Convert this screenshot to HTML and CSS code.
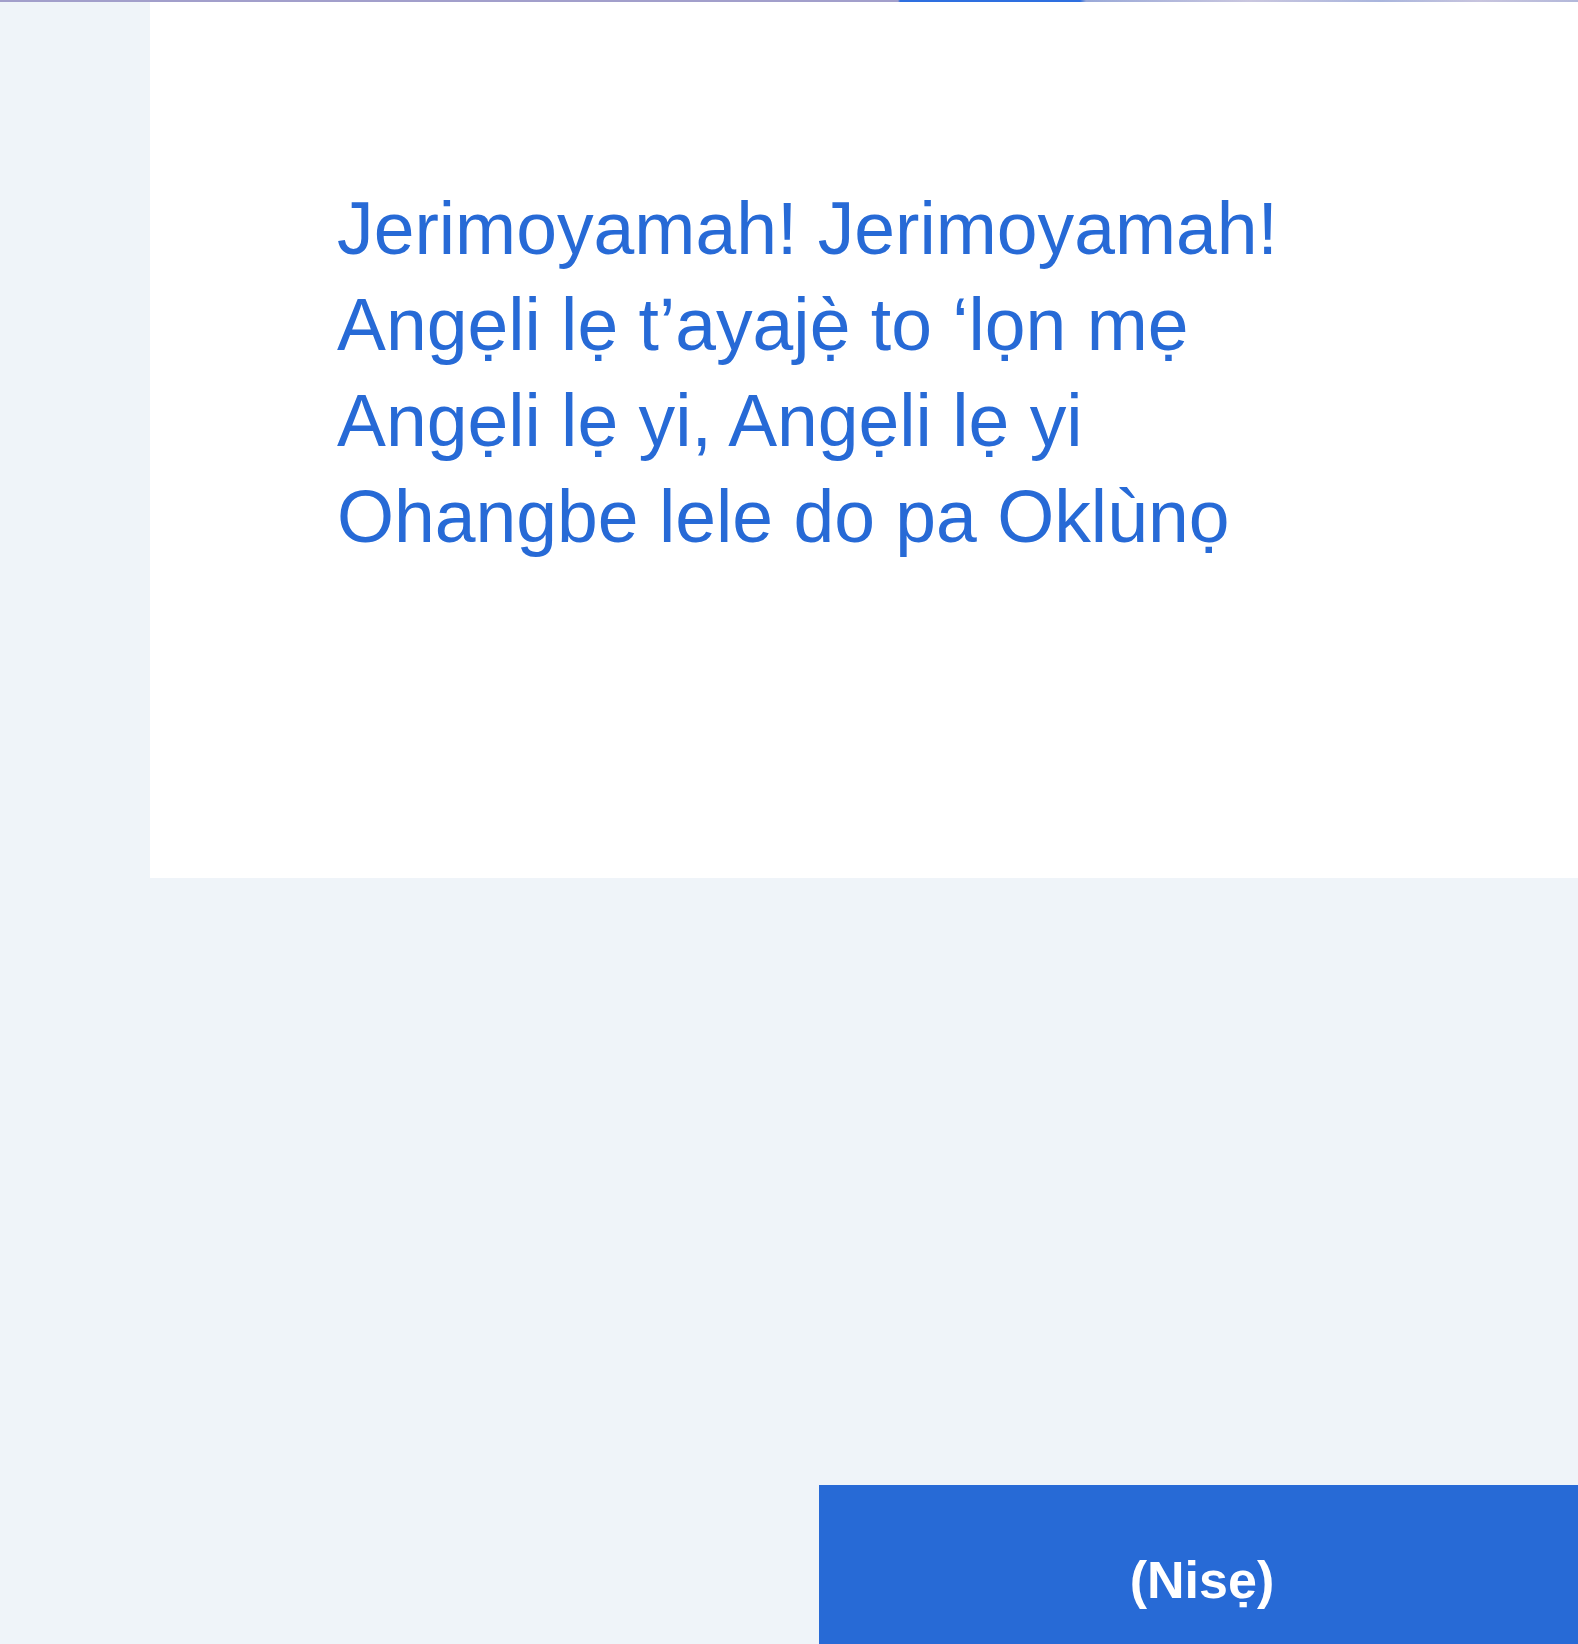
FILE: index.html
```html
<!DOCTYPE html>
<html lang="yo">
<head>
<meta charset="utf-8">
<title>Jerimoyamah</title>
<link rel="stylesheet" href="styles.css">
</head>
<body>
<div class="topbar"></div>
<main class="panel">
  <div class="lyrics">
    <p class="line">Jerimoyamah! Jerimoyamah!</p>
    <p class="line">Angẹli lẹ t’ayajẹ̀ to ‘lọn mẹ</p>
    <p class="line">Angẹli lẹ yi, Angẹli lẹ yi</p>
    <p class="line">Ohangbe lele do pa Oklùnọ</p>
  </div>
</main>
<div class="actions">
  <button class="next-btn" type="button">(Nisẹ)</button>
</div>
</body>
</html>
```

FILE: styles.css
```css
html, body {
  margin: 0;
  padding: 0;
}
body {
  background: #eff4f9;
  font-family: "Liberation Sans", Arial, Helvetica, sans-serif;
  width: 1578px;
  height: 1644px;
  overflow: hidden;
}
.topbar {
  height: 2px;
  background: linear-gradient(90deg,
    #a29fcb 0px, #a29fcb 898px,
    #2e6fe0 900px, #2e6fe0 1080px,
    #9aa9d8 1086px, #c9c6df 1250px, #a9b5dd 1380px, #c7c4de 1480px, #b3b8da 1578px);
}
.panel {
  margin-left: 150px;
  height: 876px;
  box-sizing: border-box;
  background: #ffffff;
  padding: 179px 0 0 187px;
}
.lyrics {
  color: #276ad6;
  font-size: 73.3px;
  line-height: 96px;
}
.line {
  margin: 0;
  white-space: nowrap;
}
.actions {
  margin-top: 607px;
  margin-left: 819px;
  display: flex;
}
.next-btn {
  flex: 1;
  border: 0;
  margin: 0;
  background: #276ad6;
  color: #ffffff;
  font-family: "Liberation Sans", Arial, Helvetica, sans-serif;
  font-weight: bold;
  font-size: 52px;
  line-height: 60px;
  padding: 65px 0 60px 7px;
  text-align: center;
  align-self: flex-start;
  display: block;
}
```
